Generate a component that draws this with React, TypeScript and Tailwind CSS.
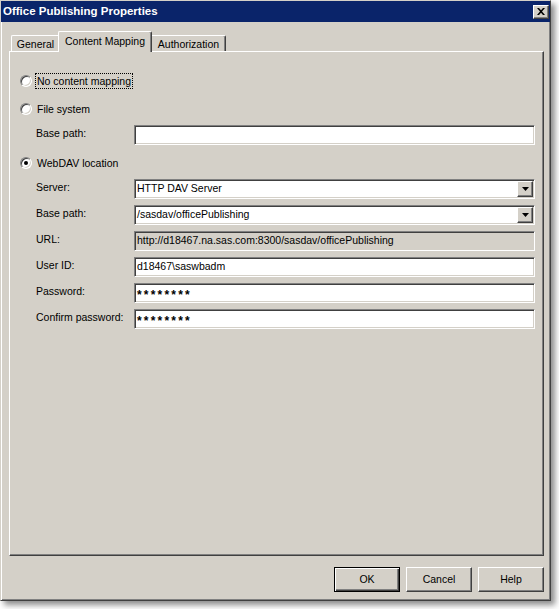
import React from "react";

const FONT = { fontFamily: '"Liberation Sans", Arial, sans-serif' };

// classic sunken field edge
const sunken =
  "border border-t-[#808080] border-l-[#808080] border-r-white border-b-white shadow-[inset_1px_1px_0_#404040,inset_-1px_-1px_0_#d4d0c8]";
const raised =
  "border border-t-white border-l-white border-r-[#404040] border-b-[#404040] shadow-[inset_-1px_-1px_0_#808080]";

function Radio({ checked }: { checked?: boolean }) {
  return (
    <span className="relative inline-flex w-[12px] h-[12px] shrink-0 rounded-full bg-white border border-t-[#808080] border-l-[#808080] border-r-white border-b-white shadow-[inset_1px_1px_0_#404040,inset_-1px_-1px_0_#d4d0c8] items-center justify-center">
      {checked && <span className="w-[4px] h-[4px] rounded-full bg-black" />}
    </span>
  );
}

function RadioRow({ label, checked, focused, className = "" }: { label: string; checked?: boolean; focused?: boolean; className?: string }) {
  return (
    <div className={`flex items-center h-[16px] pl-[10px] ${className}`}>
      <Radio checked={checked} />
      <span className={`ml-[4px] px-[1px] leading-[14px] ${focused ? "outline outline-1 outline-dotted outline-black" : ""}`}>
        {label}
      </span>
    </div>
  );
}

function Field({
  label,
  value = "",
  disabled,
  combo,
  secret,
  className = "",
}: {
  label: string;
  value?: string;
  disabled?: boolean;
  combo?: boolean;
  secret?: boolean;
  className?: string;
}) {
  return (
    <div className={`flex items-center h-[20px] ${className}`}>
      <span className="w-[98px] pl-[26px] box-content -mt-[2px] whitespace-nowrap">{label}</span>
      <div
        className={`w-[401px] h-[20px] flex items-center ${sunken} ${disabled ? "bg-[#d4d0c8]" : "bg-white"}`}
      >
        {secret ? (
          <span className="flex-1 pl-[2px] pt-[4px] text-[12px] font-bold tracking-[2.2px] leading-none">{value}</span>
        ) : (
          <span className="flex-1 pl-[2px] whitespace-nowrap overflow-hidden text-black">{value}</span>
        )}
        {combo && (
          <span className={`w-[16px] h-[16px] mr-[1px] bg-[#d4d0c8] flex items-center justify-center ${raised}`}>
            <svg width="7" height="4" viewBox="0 0 7 4">
              <path d="M0 0h7L3.5 4z" fill="#000" />
            </svg>
          </span>
        )}
      </div>
    </div>
  );
}

function Button({ label, isDefault }: { label: string; isDefault?: boolean }) {
  return (
    <div
      className={`w-[66px] h-[25px] flex items-center justify-center bg-[#d4d0c8] ${
        isDefault
          ? "border border-black shadow-[inset_1px_1px_0_white,inset_-1px_-1px_0_#404040,inset_-2px_-2px_0_#808080]"
          : raised
      }`}
    >
      {label}
    </div>
  );
}

export default function App() {
  return (
    <div className="w-[559px] h-[609px] bg-white text-[10.5px] text-black" style={FONT}>
      <div className="w-[551px] h-[601px] bg-[#d4d0c8] border border-t-[#d4d0c8] border-l-[#d4d0c8] border-r-[#404040] border-b-[#404040] shadow-[inset_1px_1px_0_white,inset_-1px_-1px_0_#808080,4px_4px_6px_rgba(0,0,0,0.45)] flex flex-col">
        {/* title bar */}
        <div className="h-[21px] bg-[#0a246a] flex items-center justify-between pl-[2px] pr-[1px]">
          <span className="text-white font-bold text-[11.5px]">Office Publishing Properties</span>
          <span className={`w-[16px] h-[14px] bg-[#d4d0c8] flex items-center justify-center ${raised}`}>
            <svg width="8" height="7" viewBox="0 0 8 7">
              <path d="M0 0h2l2 2.3L6 0h2L5 3.5 8 7H6L4 4.7 2 7H0l3-3.5z" fill="#000" />
            </svg>
          </span>
        </div>

        {/* tabs */}
        <div className="flex items-end h-[29px] pl-[10px]">
          <div className="w-[48px] h-[17px] flex items-center justify-center border-t border-l border-t-white border-l-white rounded-tl-[2px] mb-[-1px] pt-[1px]">
            General
          </div>
          <div className="relative z-10 w-[94px] h-[21px] -ml-[1px] flex items-center justify-center bg-[#d4d0c8] border-t border-l border-r border-t-white border-l-white border-r-[#404040] rounded-t-[2px] mb-[-1px] shadow-[inset_-1px_0_0_#808080]">
            Content Mapping
          </div>
          <div className="w-[74px] h-[17px] flex items-center justify-center border-t border-r border-t-white border-r-[#404040] rounded-tr-[2px] mb-[-1px] shadow-[inset_-1px_0_0_#808080] pt-[1px]">
            Authorization
          </div>
        </div>

        {/* panel */}
        <div className="ml-[8px] w-[535px] h-[505px] border border-t-white border-l-white border-r-[#404040] border-b-[#404040] shadow-[inset_-1px_-1px_0_#808080] flex flex-col">
          <RadioRow label="No content mapping" focused className="mt-[21px]" />
          <RadioRow label="File system" className="mt-[12px]" />
          <Field label="Base path:" className="mt-[8px]" />
          <RadioRow label="WebDAV location" checked className="mt-[10px]" />
          <Field label="Server:" value="HTTP DAV Server" combo className="mt-[8px]" />
          <Field label="Base path:" value="/sasdav/officePublishing" combo className="mt-[6px]" />
          <Field label="URL:" value="http://d18467.na.sas.com:8300/sasdav/officePublishing" disabled className="mt-[6px]" />
          <Field label="User ID:" value="d18467\saswbadm" className="mt-[6px]" />
          <Field label="Password:" value="********" secret className="mt-[6px]" />
          <Field label="Confirm password:" value="********" secret className="mt-[6px]" />
        </div>

        {/* buttons */}
        <div className="flex justify-end gap-[6px] mt-[11px] pr-[6px]">
          <Button label="OK" isDefault />
          <Button label="Cancel" />
          <Button label="Help" />
        </div>
      </div>
    </div>
  );
}
